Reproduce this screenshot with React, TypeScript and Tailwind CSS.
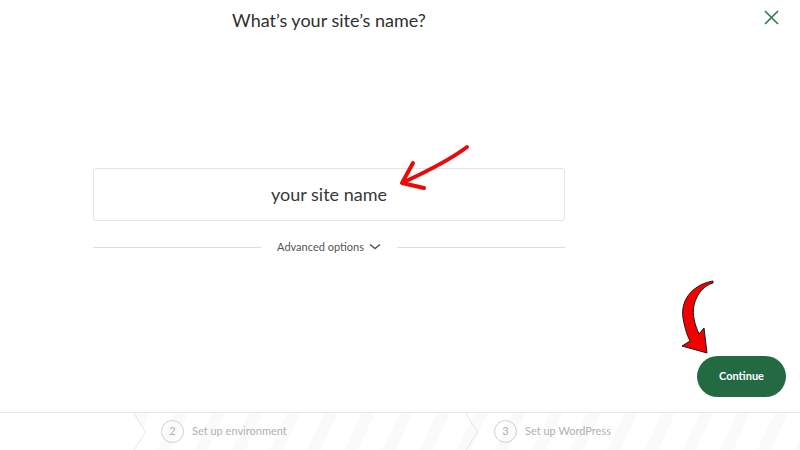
import React from "react";

function Chevron({ left }: { left: number }) {
  return (
    <svg
      className="absolute top-0"
      style={{ left }}
      width="14"
      height="38"
      viewBox="0 0 14 38"
    >
      <path d="M0.5 0 L12.5 19 L0.5 38" fill="none" stroke="#e6e6e6" strokeWidth="1" />
    </svg>
  );
}

function Step({ n, label }: { n: number; label: string }) {
  return (
    <div className="flex items-center gap-[8px]">
      <div className="w-[23px] h-[23px] rounded-full border-[1.5px] border-[#cfcfcf] flex items-center justify-center text-[11px] text-[#b0b0b0]">
        {n}
      </div>
      <span className="text-[11px] text-[#b0b0b0]">{label}</span>
    </div>
  );
}

export default function App() {
  return (
    <div
      className="w-[800px] h-[450px] bg-white flex flex-col relative overflow-hidden"
      style={{ fontFamily: "Lato, 'Open Sans', sans-serif" }}
    >
      <div className="flex-1 flex flex-col">
        <div className="flex">
          <div className="ml-[93px] w-[472px] flex flex-col">
            <h1 className="text-center text-[18px] text-[#2f2f2f] mt-[8px] leading-[24px]">
              What’s your site’s name?
            </h1>
            <div className="mt-[136px] h-[53px] border border-[#e4e4e4] rounded-[3px] flex items-center justify-center text-[18px] text-[#383838]">
              your site name
            </div>
            <div className="mt-[18px] flex items-center">
              <div className="flex-1 h-px bg-[#dedede]" />
              <div className="px-[16px] flex items-center gap-[5px] text-[11px] text-[#555]">
                <span>Advanced options</span>
                <svg width="12" height="8" viewBox="0 0 12 8">
                  <path d="M1 1.5 L6 5.5 L11 1.5" fill="none" stroke="#555" strokeWidth="1.6" />
                </svg>
              </div>
              <div className="flex-1 h-px bg-[#dedede]" />
            </div>
          </div>
          <div className="flex-1 flex justify-end pr-[21px] pt-[10px]">
            <svg width="15" height="15" viewBox="0 0 15 15">
              <path d="M1 1 L14 14 M14 1 L1 14" stroke="#2c7a4d" strokeWidth="1.6" />
            </svg>
          </div>
        </div>
        <div className="flex-1 flex items-end justify-end pr-[14px] pb-[15px]">
          <button className="w-[89px] h-[41px] rounded-full bg-[#236a43] text-white text-[11px] font-bold">
            Continue
          </button>
        </div>
      </div>

      <div className="h-[38px] border-t border-[#e8e8e8] relative bg-[repeating-linear-gradient(115deg,#ffffff_0px,#ffffff_22px,#fafafa_22px,#fafafa_34px)] flex items-center">
        <div className="absolute inset-y-0 left-0 w-[146px] bg-white [clip-path:polygon(0_0,133px_0,145px_50%,133px_100%,0_100%)]" />
        <Chevron left={133} />
        <Chevron left={465} />
        <div className="absolute left-[161px] top-[7px]">
          <Step n={2} label="Set up environment" />
        </div>
        <div className="absolute left-[494px] top-[7px]">
          <Step n={3} label="Set up WordPress" />
        </div>
      </div>

      <svg className="absolute left-0 top-0 pointer-events-none" width="800" height="450" viewBox="0 0 800 450">
        <path
          d="M467 147 C450 160 430 170 404 182"
          fill="none"
          stroke="#ea0a0a"
          strokeWidth="4"
          strokeLinecap="round"
        />
        <path
          d="M413 163 L402 183 L424 188"
          fill="none"
          stroke="#ea0a0a"
          strokeWidth="4"
          strokeLinecap="round"
          strokeLinejoin="round"
        />
        <path
          d="M713 281 C695 284 680 298 683 318 C685 330 688 337 690 341 L682 346 L707 353 L704 328 L699 334 C695 325 692 315 694 305 C697 293 705 285 713 283 Z"
          fill="#f20000"
          stroke="#1a1a1a"
          strokeWidth="1"
          strokeLinejoin="round"
        />
      </svg>
    </div>
  );
}
